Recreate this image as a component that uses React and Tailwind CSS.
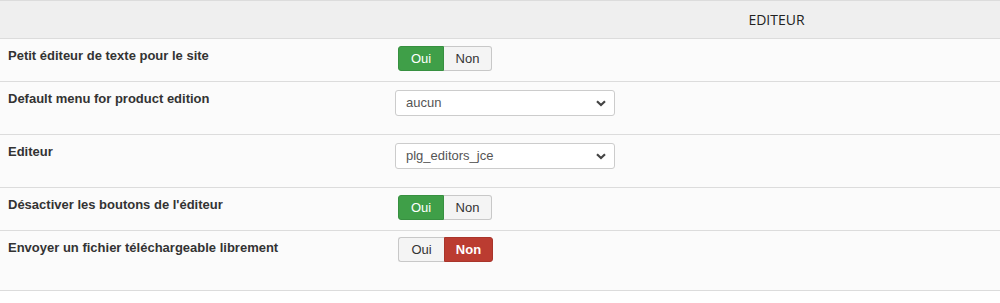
import { useState } from "react";

function Toggle({ value }) {
  const yes = value === "oui";
  return (
    <div className="inline-flex h-[25px] ml-[3px] text-[13px] leading-none">
      <span
        className={
          yes
            ? "w-[46px] flex items-center justify-center rounded-l-[3px] bg-[#3f9f48] border border-[#379040] text-white"
            : "w-[46px] flex items-center justify-center rounded-l-[3px] bg-[#f4f4f4] border border-[#c8c8c8] border-r-0 text-[#333]"
        }
      >
        Oui
      </span>
      <span
        className={
          !yes
            ? "w-[49px] flex items-center justify-center rounded-r-[3px] bg-[#bb3c31] border border-[#a9352b] text-white font-bold"
            : "w-[48px] flex items-center justify-center rounded-r-[3px] bg-[#f4f4f4] border border-[#c8c8c8] border-l-0 text-[#333]"
        }
      >
        Non
      </span>
    </div>
  );
}

function Select({ value }) {
  return (
    <div className="relative w-[220px] h-[26px] rounded-[3px] border border-[#ccc] bg-white text-[13px] text-[#555] flex items-center pl-[10px]">
      {value}
      <svg className="absolute right-[8px] top-[9px]" width="10" height="7" viewBox="0 0 10 7">
        <path d="M1 1.2 L5 5 L9 1.2" fill="none" stroke="#444" strokeWidth="2.2" />
      </svg>
    </div>
  );
}

const rows = [
  { label: "Petit éditeur de texte pour le site", toggle: "oui", pad: "pt-[7px] pb-[10px]" },
  { label: "Default menu for product edition", select: "aucun", pad: "pt-2 pb-[18px]" },
  { label: "Editeur", select: "plg_editors_jce", pad: "pt-2 pb-[18px]" },
  { label: "Désactiver les boutons de l'éditeur", toggle: "oui", pad: "pt-[7px] pb-[10px]" },
  { label: "Envoyer un fichier téléchargeable librement", toggle: "non", pad: "pt-[6px] pb-[28px]" },
];

export default function App() {
  const [data] = useState(rows);
  return (
    <div className="w-full bg-white font-['Liberation_Sans',Arial,sans-serif] text-[#333]">
      <div className="border-t border-[#dcdcdc]">
        <div className="flex h-[38px] bg-[#efefef] border-b border-[#dcdcdc]">
          <div className="w-[553px]" />
          <div className="flex-1 flex items-center justify-center font-['Open_Sans',sans-serif] text-[14px] text-[#222]">
            EDITEUR
          </div>
        </div>
        {data.map((r) => (
          <div key={r.label} className="grid grid-cols-[395px_1fr] bg-[#fbfbfb] border-b border-[#dcdcdc]">
            <div className="pl-2 pt-2 text-[13px] leading-[18px] font-bold">{r.label}</div>
            <div className={r.pad}>
              {r.toggle ? <Toggle value={r.toggle} /> : <Select value={r.select} />}
            </div>
          </div>
        ))}
      </div>
    </div>
  );
}
